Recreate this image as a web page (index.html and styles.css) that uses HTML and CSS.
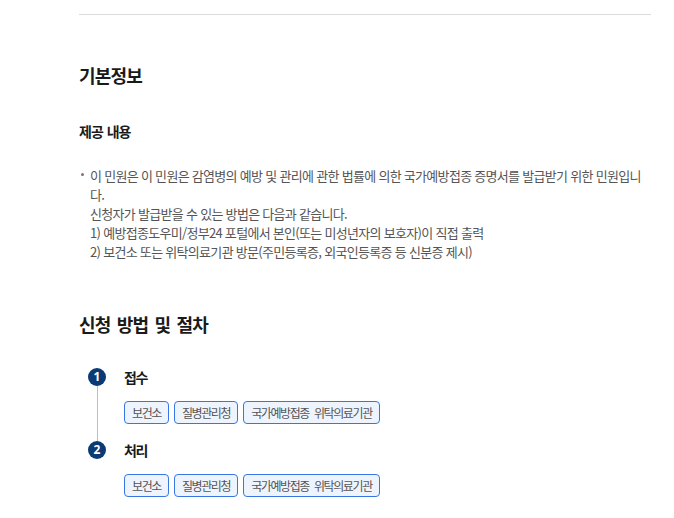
FILE: index.html
```html
<!DOCTYPE html>
<html lang="ko">
<head>
<meta charset="utf-8">
<title>기본정보</title>
<link rel="stylesheet" href="styles.css">
</head>
<body>
<div class="page">
  <div class="divider"></div>
  <h2 class="section-title">기본정보</h2>
  <h3 class="sub-title">제공 내용</h3>
  <ul class="info-list">
    <li class="info-item"><span class="bullet"></span><p class="info-text">이 민원은 이 민원은 감염병의 예방 및 관리에 관한 법률에 의한 국가예방접종 증명서를 발급받기 위한 민원입니다.<br>신청자가 발급받을 수 있는 방법은 다음과 같습니다.<br>1) 예방접종도우미/정부24 포털에서 본인(또는 미성년자의 보호자)이 직접 출력<br>2) 보건소 또는 위탁의료기관 방문(주민등록증, 외국인등록증 등 신분증 제시)</p></li>
  </ul>
  <h2 class="section-title procedure-title">신청 방법 및 절차</h2>
  <ol class="steps">
    <li class="step">
      <div class="marker"><span class="num">1</span><span class="line"></span></div>
      <div class="step-body">
        <div class="step-name">접수</div>
        <div class="tags">
          <span class="tag">보건소</span>
          <span class="tag">질병관리청</span>
          <span class="tag">국가예방접종 위탁의료기관</span>
        </div>
      </div>
    </li>
    <li class="step last">
      <div class="marker"><span class="num">2</span></div>
      <div class="step-body">
        <div class="step-name">처리</div>
        <div class="tags">
          <span class="tag">보건소</span>
          <span class="tag">질병관리청</span>
          <span class="tag">국가예방접종 위탁의료기관</span>
        </div>
      </div>
    </li>
  </ol>
</div>
</body>
</html>
```
FILE: styles.css
```css
* { box-sizing: border-box; }
html, body { margin: 0; padding: 0; background: #fff; }
body {
  font-family: "Noto Sans CJK KR", "Noto Sans", sans-serif;
  color: #1e1e1e;
}
.page {
  width: 674px;
  padding: 14px 23px 0 79px;
}
.divider {
  border-top: 1px solid #dcdcdc;
}
.section-title {
  margin: 47px 0 0;
  font-size: 18px;
  line-height: 26px;
  font-weight: 700;
  letter-spacing: -0.8px;
  word-spacing: 2px;
  color: #1a1a1a;
}
.sub-title {
  margin: 33px 0 0;
  font-size: 14px;
  line-height: 20px;
  font-weight: 700;
  letter-spacing: -1px;
  word-spacing: 1px;
  color: #1a1a1a;
}
.info-list {
  list-style: none;
  margin: 25px 0 0;
  padding: 0;
}
.info-item {
  display: flex;
  align-items: flex-start;
}
.bullet {
  flex: none;
  width: 3px;
  height: 3px;
  margin: 7px 6px 0 2px;
  background: #777;
  border-radius: 50%;
}
.info-text {
  margin: 0;
  flex: 1;
  font-size: 13px;
  line-height: 19px;
  letter-spacing: -0.7px;
  color: #555;
}
.procedure-title {
  margin-top: 50px;
}
.steps {
  list-style: none;
  margin: 31px 0 0;
  padding: 0 0 0 9px;
}
.step {
  display: flex;
  gap: 18px;
}
.marker {
  flex: none;
  width: 18px;
  display: flex;
  flex-direction: column;
  align-items: center;
}
.num {
  flex: none;
  width: 18px;
  height: 18px;
  border-radius: 50%;
  background: #0b3a74;
  color: #fff;
  font-family: "Noto Sans", "Noto Sans CJK KR", sans-serif;
  font-size: 12px;
  font-weight: 700;
  line-height: 18px;
  text-align: center;
}
.line {
  flex: 1;
  width: 1px;
  background: #b9c0cc;
}
.step-body {
  flex: 1;
  padding-bottom: 17px;
}
.step-name {
  font-size: 14px;
  line-height: 18px;
  font-weight: 700;
  letter-spacing: -1.3px;
  color: #1a1a1a;
}
.tags {
  display: flex;
  gap: 5px;
  margin-top: 15px;
}
.tag {
  height: 23px;
  padding: 0 7px;
  border: 1px solid #3876e3;
  border-radius: 4px;
  background: #eef4fd;
  color: #555;
  font-size: 12px;
  line-height: 21px;
  letter-spacing: -1.4px;
  word-spacing: 3px;
  white-space: nowrap;
}
```
